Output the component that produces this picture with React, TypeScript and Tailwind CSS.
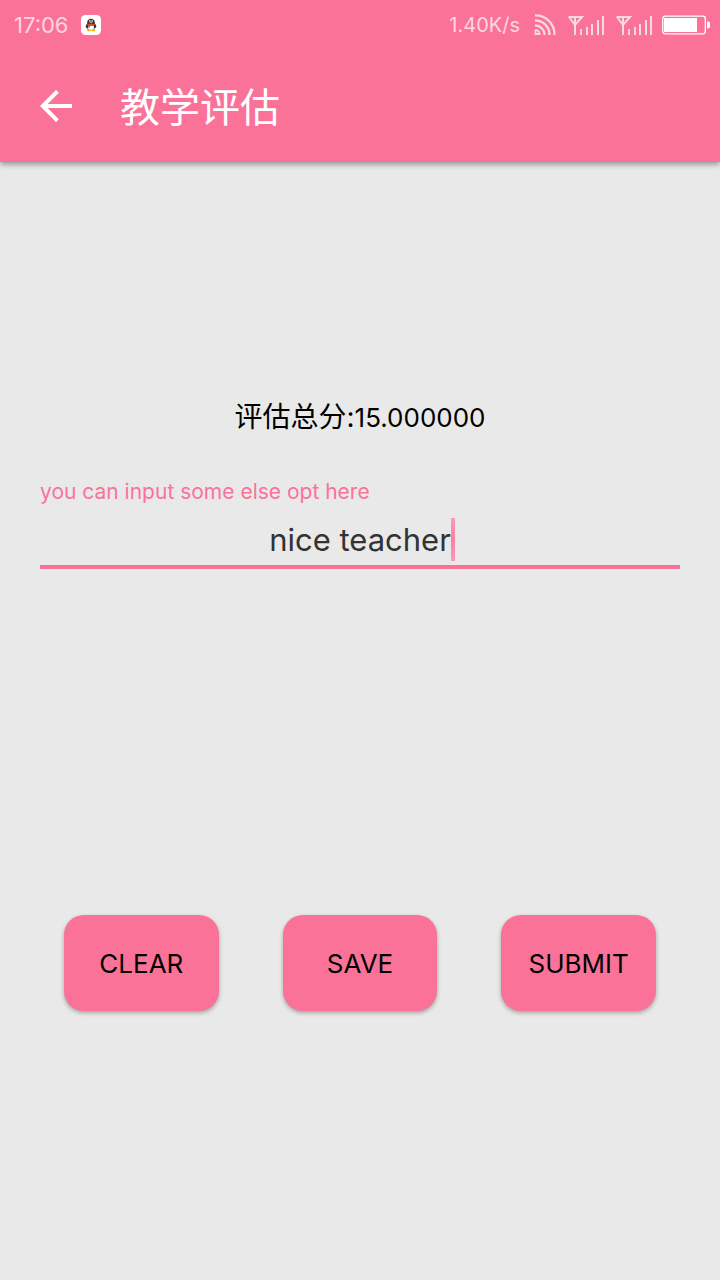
import { useState } from "react";

function QQIcon() {
  return (
    <svg viewBox="0 0 20 20" className="size-5" aria-label="QQ message" role="img">
      <rect width="20" height="20" rx="4.5" fill="#fff" />
      <ellipse cx="10" cy="11" rx="4.6" ry="4.2" fill="#333" />
      <path d="M6.4 8.8 4.9 12 5.900 12.400z M13.600 8.800 15.100 12 14.100 12.400z" fill="#333" stroke="#333" strokeWidth="0.8" />
      <ellipse cx="10" cy="12.400" rx="3" ry="2.900" fill="#fff" />
      <path d="M6.200 7.400C6.200 2.400 13.800 2.400 13.800 7.400v1.600H6.200z" fill="#333" />
      <ellipse cx="8.900" cy="6" rx="0.800" ry="1" fill="#ddd" />
      <ellipse cx="11.100" cy="6" rx="0.800" ry="1" fill="#ddd" />
      <ellipse cx="10" cy="7.700" rx="1.800" ry="0.600" fill="#c99a50" />
      <path d="M6.200 8.600c2.400 1.300 5.200 1.300 7.600 0v1.500c-1.600.9-3.400 1.100-4.900.9v1.500H7.200v-2L6.200 10z" fill="#d9482f" />
      <ellipse cx="7.700" cy="15.200" rx="2" ry="1.100" fill="#f7b500" />
      <ellipse cx="12.300" cy="15.200" rx="2" ry="1.100" fill="#f7b500" />
    </svg>
  );
}

function FeedIcon() {
  return (
    <svg viewBox="0 0 22 22" className="size-[22px]" fill="none" stroke="#f6dbe0" strokeWidth="2.200" aria-hidden="true">
      <path d="M1 1.300A19 19 0 0 1 20.500 21" />
      <path d="M1 6.300A14.500 14.500 0 0 1 15.500 21" />
      <path d="M1 11.300A9.500 9.500 0 0 1 10.500 21" />
      <path d="M1.500 16v4H5.500A4 4 0 0 0 1.500 16z" strokeWidth="1.800" />
    </svg>
  );
}

function SignalIcon() {
  return (
    <svg viewBox="0 0 36 19" className="h-[19px] w-9" fill="none" stroke="#f6dbe0" strokeWidth="2" aria-hidden="true">
      <path d="M0.500 1H14L7 9 1 1M7 1V19" />
      <path d="M13 13v6M19 11V19M24 8V19M30 4V19M35 0V19" />
    </svg>
  );
}

function BatteryIcon() {
  return (
    <svg viewBox="0 0 48 20" className="h-5 w-12" aria-label="Battery" role="img">
      <rect x="0.700" y="1.200" width="42.600" height="17.600" rx="2.500" fill="none" stroke="#fff" strokeWidth="1.300" />
      <rect x="2" y="3" width="33" height="14" fill="#fff" />
      <path d="M45 6.500a3.400 3.400 0 0 1 0 7z" fill="#fff" />
    </svg>
  );
}

function StatusBar() {
  return (
    <div className="flex h-[50px] items-center justify-between pr-2.5 pl-3.5 text-xl text-[#fed5e0]">
      <div className="flex items-center gap-3">
        <span className="text-[22px]">17:06</span>
        <QQIcon />
      </div>
      <div className="flex items-center">
        <span className="mr-3.5">1.40K/s</span>
        <FeedIcon />
        <span className="ml-3 flex gap-3">
          <SignalIcon />
          <SignalIcon />
        </span>
        <span className="ml-2.5">
          <BatteryIcon />
        </span>
      </div>
    </div>
  );
}

function ActionButton({ label, onClick }: { label: string; onClick?: () => void }) {
  return (
    <button
      type="button"
      onClick={onClick}
      className="h-24 flex-1 rounded-[20px] bg-[#fb7299] text-[26px] text-black uppercase shadow-[0_2px_4px_rgba(0,0,0,0.3)]"
    >
      {label}
    </button>
  );
}

export default function App() {
  const [comment, setComment] = useState("nice teacher");

  return (
    <div className="min-h-screen bg-[#e9e9e9] font-['Inter','Noto_Sans_CJK_SC',sans-serif]">
      <header className="bg-[#fb7299] shadow-[0_2px_6px_rgba(0,0,0,0.4)]">
        <StatusBar />
        <div className="flex h-28 items-center gap-10 px-8 text-white">
          <button type="button" aria-label="Back">
            <svg viewBox="0 0 24 24" className="size-12" fill="currentColor" aria-hidden="true">
              <path d="M20 11H7.830l5.590-5.590L12 4l-8 8 8 8 1.410-1.410L7.830 13H20v-2z" />
            </svg>
          </button>
          <h1 className="pt-1 text-[40px] leading-[56px]">教学评估</h1>
        </div>
      </header>

      <main className="pt-[235px]">
        <p className="text-center text-[28px] leading-10 text-black">
          评估总分:<span className="text-[26px]">15.000000</span>
        </p>

        <div className="mx-10 mt-[38px] border-b-4 border-[#fb7299]">
          <label htmlFor="comment" className="block text-[21px] leading-8 text-[#fb7299]">
            you can input some else opt here
          </label>
          <div className="mt-2.5 flex h-[47px] justify-center">
            <div className="relative h-[43px]">
              <input
                id="comment"
                type="text"
                value={comment}
                onChange={(e) => setComment(e.target.value)}
                className="block h-full [field-sizing:content] bg-transparent text-[31px] text-[#333333] caret-transparent outline-none"
              />
              <span className="absolute top-0 left-full h-full w-1 bg-linear-to-b from-[#fb9ab6] via-[#fb7fa2] to-[#fb9ab6]" />
            </div>
          </div>
        </div>

        <div className="mt-[346px] flex gap-16 px-16">
          <ActionButton label="Clear" onClick={() => setComment("")} />
          <ActionButton label="Save" />
          <ActionButton label="Submit" />
        </div>
      </main>
    </div>
  );
}
